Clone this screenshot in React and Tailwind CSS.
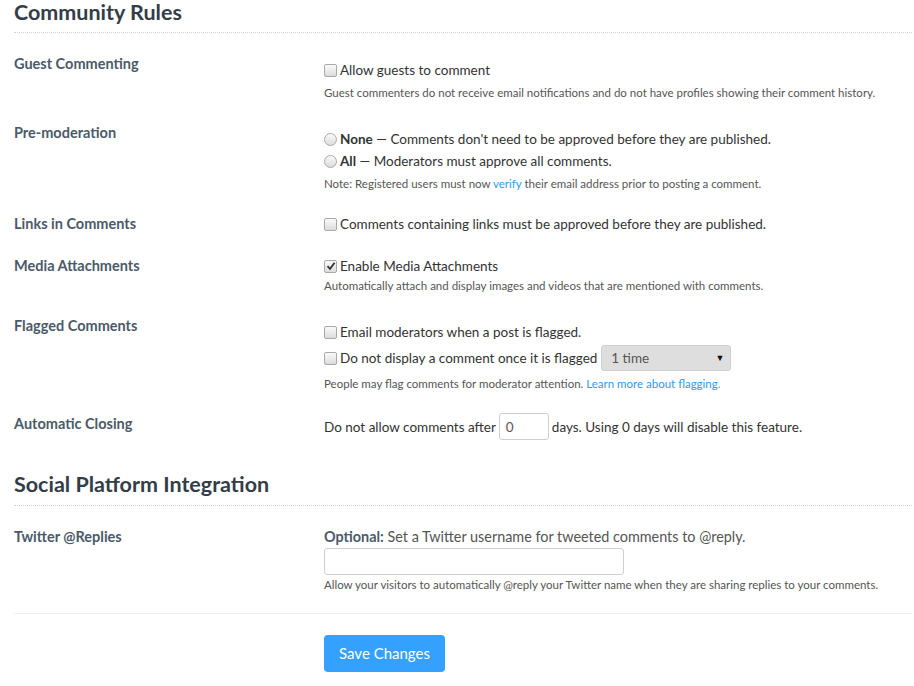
import React from "react";

const font = { fontFamily: "Lato, 'Open Sans', sans-serif" };

function Check({ checked }) {
  return (
    <span className="inline-flex items-center justify-center w-[13px] h-[13px] mr-[3px] border border-[#a9a9a9] rounded-[2px] bg-gradient-to-b from-[#fafafa] to-[#dcdcdc] shrink-0">
      {checked && (
        <svg width="10" height="10" viewBox="0 0 10 10">
          <path d="M1.5 5.2 L4 7.8 L8.6 1.8" fill="none" stroke="#333" strokeWidth="1.8" />
        </svg>
      )}
    </span>
  );
}

function Radio() {
  return (
    <span className="inline-block w-[13px] h-[13px] mr-[3px] border border-[#a9a9a9] rounded-full bg-gradient-to-b from-[#fafafa] to-[#dcdcdc] shrink-0" />
  );
}

function Label({ children, pt = "pt-0" }) {
  return (
    <div className={`w-[310px] shrink-0 text-[14.5px] leading-[20px] font-bold text-[#4b5a69] ${pt}`}>
      {children}
    </div>
  );
}

function Help({ children, cls = "" }) {
  return <div className={`text-[11.5px] leading-[16px] text-[#555] ${cls}`}>{children}</div>;
}

function Line({ children, cls = "" }) {
  return <div className={`flex items-center text-[13.5px] leading-[20px] text-[#333] ${cls}`}>{children}</div>;
}

export default function App() {
  return (
    <div className="bg-white w-[914px] h-[686px] overflow-hidden pl-[14px] pr-[2px]" style={font}>
      <h2 className="pt-[1px] text-[21.5px] leading-[22px] font-bold text-[#333d47] pb-[9px] border-b border-dotted border-[#ccd4dd]">
        Community Rules
      </h2>

      <div className="flex mt-[21px]">
        <Label>Guest Commenting</Label>
        <div className="pt-[6px]">
          <Line><Check />Allow guests to comment</Line>
          <Help cls="mt-[5px]">Guest commenters do not receive email notifications and do not have profiles showing their comment history.</Help>
        </div>
      </div>

      <div className="flex mt-[22px]">
        <Label>Pre-moderation</Label>
        <div className="pt-[6px]">
          <Line><Radio /><b className="font-bold">None</b>&nbsp;— Comments don't need to be approved before they are published.</Line>
          <Line cls="mt-[2px]"><Radio /><b className="font-bold">All</b>&nbsp;— Moderators must approve all comments.</Line>
          <Help cls="mt-[5px]">Note: Registered users must now <span className="text-[#2d9cf0]">verify</span> their email address prior to posting a comment.</Help>
        </div>
      </div>

      <div className="flex mt-[22px]">
        <Label>Links in Comments</Label>
        <div>
          <Line><Check />Comments containing links must be approved before they are published.</Line>
        </div>
      </div>

      <div className="flex mt-[22px]">
        <Label>Media Attachments</Label>
        <div>
          <Line><Check checked />Enable Media Attachments</Line>
          <Help cls="mt-[2px]">Automatically attach and display images and videos that are mentioned with comments.</Help>
        </div>
      </div>

      <div className="flex mt-[22px]">
        <Label>Flagged Comments</Label>
        <div className="pt-[6px]">
          <Line><Check />Email moderators when a post is flagged.</Line>
          <Line cls="mt-[3px]">
            <Check />Do not display a comment once it is flagged
            <span className="ml-[4px] flex items-center justify-between w-[130px] h-[26px] bg-[#dedede] border border-[#cfcfcf] rounded-[3px] pl-[9px] pr-[6px] text-[#555]">
              <span>1 time</span>
              <span className="text-[9px] text-[#111]">▼</span>
            </span>
          </Line>
          <Help cls="mt-[5px]">People may flag comments for moderator attention. <span className="text-[#2d9cf0]">Learn more about flagging.</span></Help>
        </div>
      </div>

      <div className="flex mt-[21px]">
        <Label pt="pt-[1px]">Automatic Closing</Label>
        <div>
          <Line>
            Do not allow comments after
            <span className="mx-[3px] flex items-center w-[50px] h-[27px] border border-[#cfcfcf] rounded-[3px] pl-[6px] text-[#555] bg-white">0</span>
            days. Using 0 days will disable this feature.
          </Line>
        </div>
      </div>

      <h2 className="mt-[29px] text-[21.5px] leading-[30px] font-bold text-[#333d47] pb-[6px] border-b border-dotted border-[#ccd4dd]">
        Social Platform Integration
      </h2>

      <div className="flex mt-[21px]">
        <Label>Twitter @Replies</Label>
        <div>
          <div className="text-[14.4px] leading-[20px] text-[#555]">
            <b className="font-bold text-[#4b5a69]">Optional:</b> Set a Twitter username for tweeted comments to @reply.
          </div>
          <div className="mt-[1px] w-[300px] h-[27px] border border-[#cfcfcf] rounded-[3px] bg-white" />
          <Help cls="mt-[2px]">Allow your visitors to automatically @reply your Twitter name when they are sharing replies to your comments.</Help>
        </div>
      </div>

      <div className="mt-[20px] border-t border-[#edf1f5]" />

      <div className="mt-[21px] pl-[310px]">
        <button className="w-[121px] h-[37px] rounded-[4px] bg-[#33a1fd] text-white text-[15px]">
          Save Changes
        </button>
      </div>
    </div>
  );
}
